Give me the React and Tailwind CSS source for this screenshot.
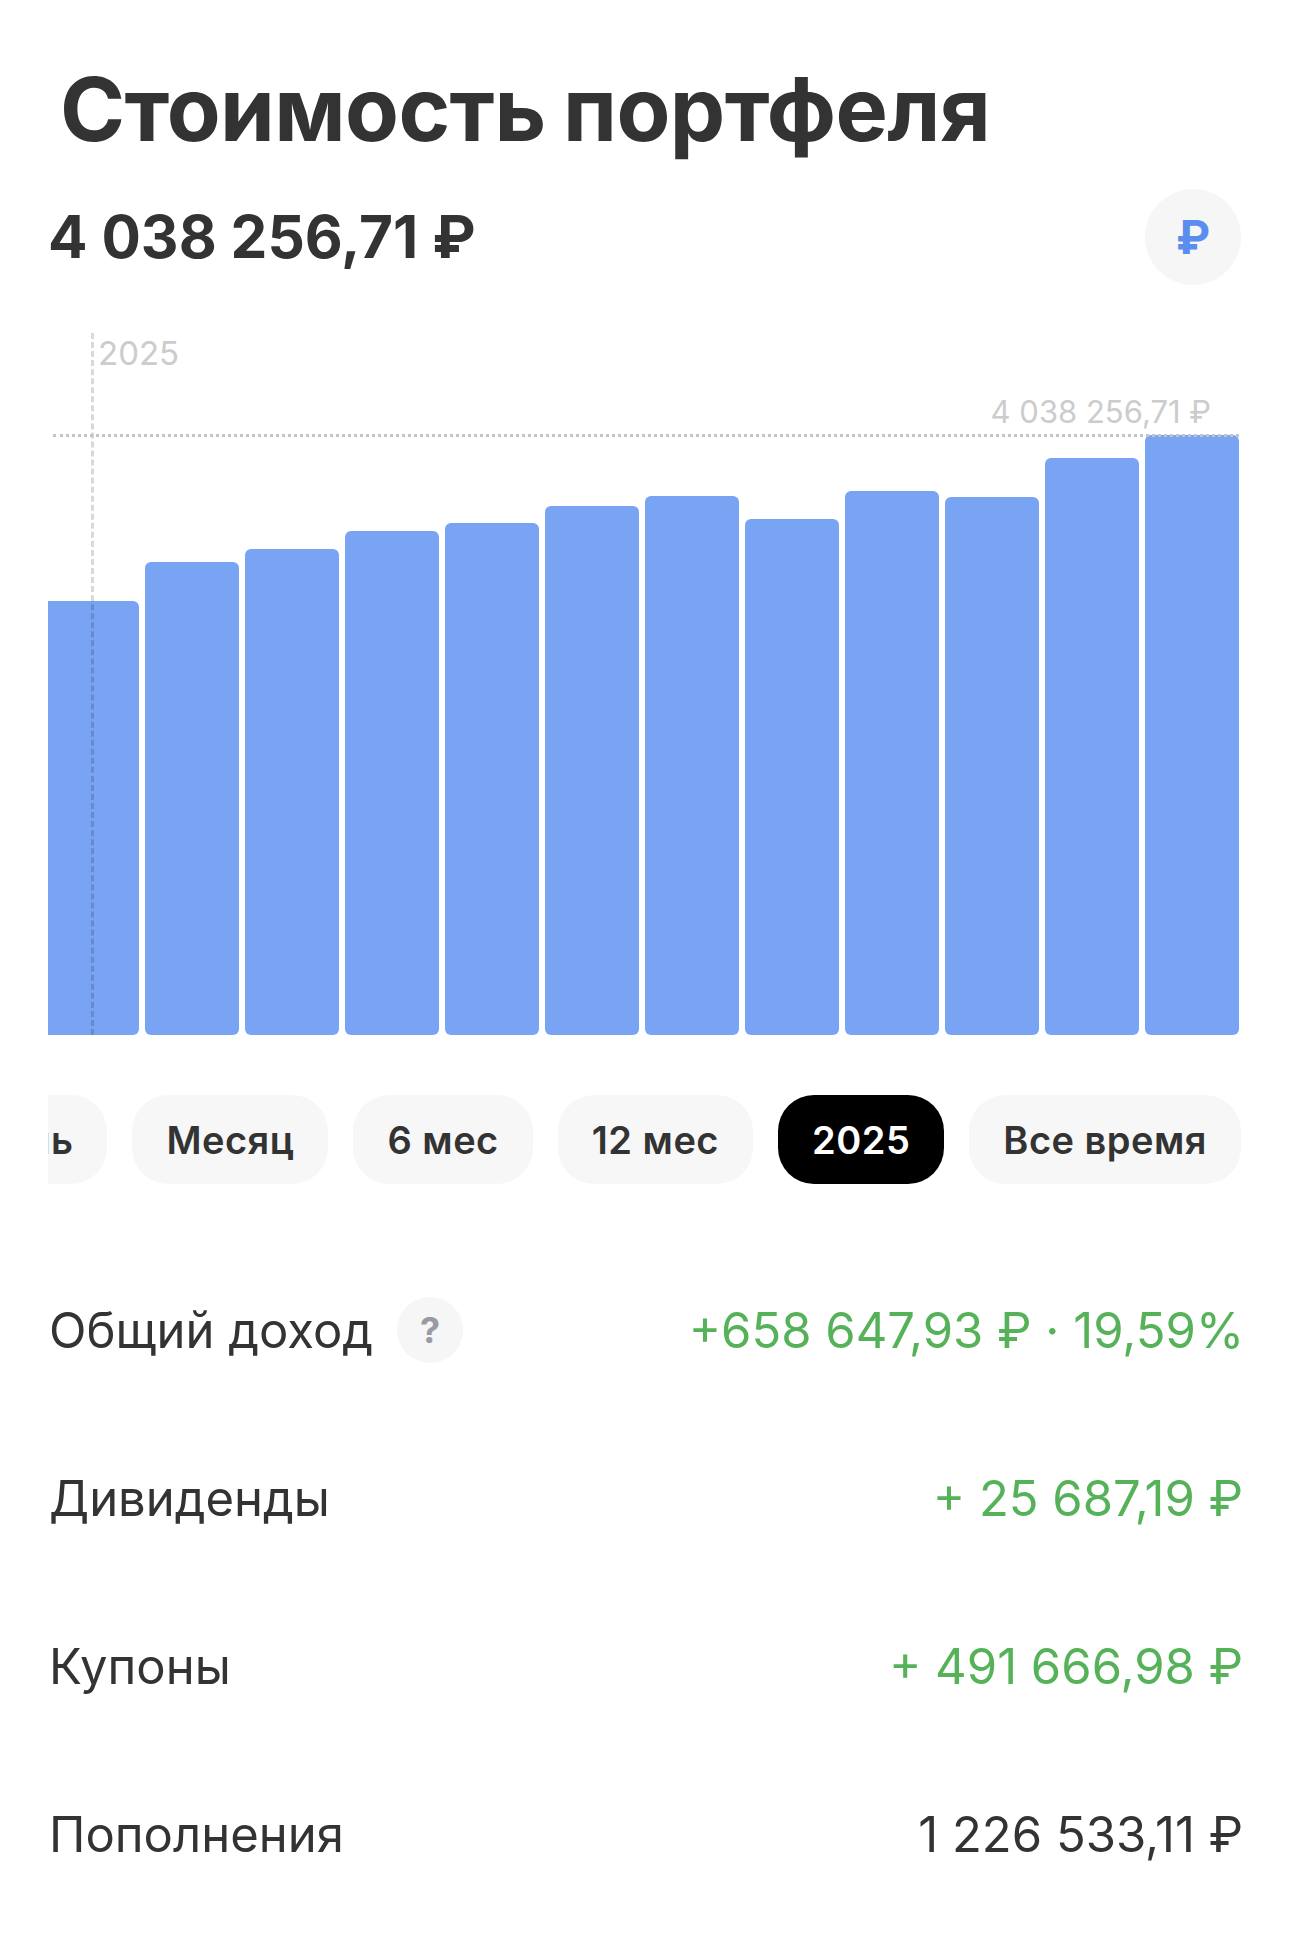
import React from 'react';

const bars = [434, 473, 486, 504, 512, 529, 539, 516, 544, 538, 577, 600];
const periods = ['День', 'Месяц', '6 мес', '12 мес', '2025', 'Все время'];
const rows = [
  { label: 'Дивиденды', value: '+ 25 687,19 ₽', green: true },
  { label: 'Купоны', value: '+ 491 666,98 ₽', green: true },
  { label: 'Пополнения', value: '1 226 533,11 ₽', green: false },
];

export default function App() {
  return (
    <div className="w-[1290px] h-[1951px] overflow-hidden bg-white text-[#333333] font-['Inter',sans-serif]">
      <h1 className="pt-[59px] pl-[60px] text-[88px] leading-[100px] font-bold tracking-[-0.6px] [word-spacing:-3px]">Стоимость портфеля</h1>

      <div className="mt-[30px] pl-[48px] pr-[49px] flex items-center justify-between">
        <div className="text-[58.5px] leading-[70px] font-bold">4 038 256,71 ₽</div>
        <div className="w-[96px] h-[96px] rounded-full bg-[#f6f6f7] flex items-center justify-center text-[#5b8def] text-[46px] font-bold">₽</div>
      </div>

      <div className="relative mt-[48px] ml-[48px] w-[1191px] h-[702px] flex items-end gap-[6.2px]">
        {bars.map((h, i) => (
          <div
            key={i}
            className={i === 0 ? 'w-[91px] shrink-0 bg-[#79a3f3] rounded-r-[6px]' : 'flex-1 bg-[#79a3f3] rounded-[6px]'}
            style={{ height: h }}
          />
        ))}
        <div className="absolute left-[43px] top-0 bottom-0 border-l-[3px] border-dashed border-black/15" />
        <div className="absolute left-[5px] right-0 top-[101px] border-t-[3px] border-dotted border-[#c4c4c4]" />
        <span className="absolute left-[50px] top-0 text-[33px] leading-[40px] text-[#cccccc]">2025</span>
        <span className="absolute right-[28px] top-[60px] text-[31px] leading-[38px] text-[#cccccc]">4 038 256,71 ₽</span>
      </div>

      <div className="mt-[60px] ml-[48px] w-[1193px] h-[89px] overflow-hidden flex justify-end gap-[25px]">
        {periods.map((p) => (
          <div
            key={p}
            className={
              p === '2025'
                ? 'shrink-0 h-[89px] pt-[2px] rounded-[36px] bg-black text-white px-[34px] flex items-center text-[38px] font-semibold tracking-[0.5px]'
                : 'shrink-0 h-[89px] pt-[2px] rounded-[36px] bg-[#f7f7f7] px-[34px] flex items-center text-[38px] font-semibold tracking-[0.5px]'
            }
          >
            {p}
          </div>
        ))}
      </div>

      <div className="mt-[114px] pl-[49px] pr-[46px] h-[66px] flex items-center justify-between text-[49px]">
        <div className="flex items-center gap-[24px]">
          <span>Общий доход</span>
          <span className="w-[66px] h-[66px] -mt-[2px] rounded-full bg-[#f6f6f7] flex items-center justify-center text-[#9a9aa5] text-[36px] font-bold">?</span>
        </div>
        <span className="text-[#56b259]">+658 647,93 ₽ · 19,59%</span>
      </div>

      {rows.map((r) => (
        <div key={r.label} className="mt-[102px] pl-[49px] pr-[47px] h-[66px] flex items-center justify-between text-[49px]">
          <span>{r.label}</span>
          <span className={r.green ? 'text-[#56b259]' : ''}>{r.value}</span>
        </div>
      ))}
    </div>
  );
}
